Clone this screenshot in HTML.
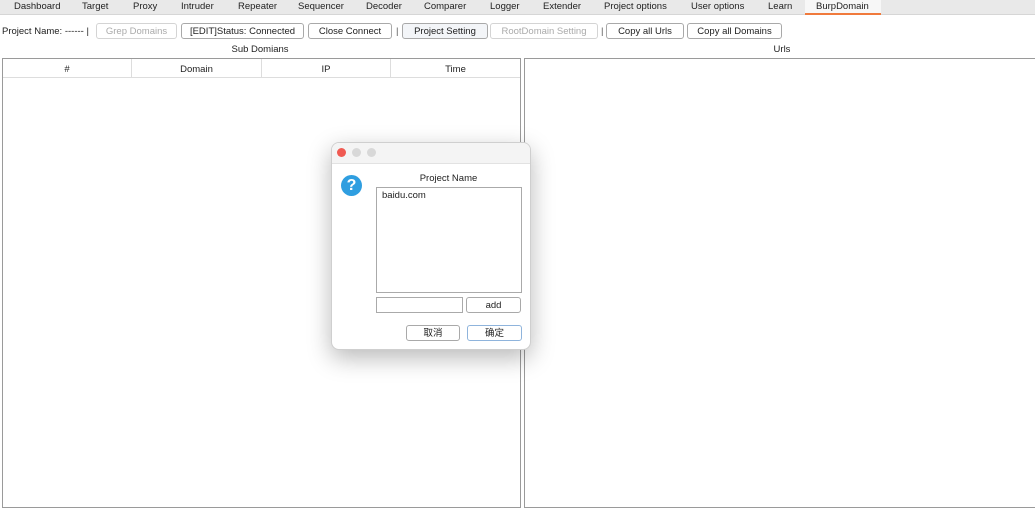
<!DOCTYPE html>
<html><head><meta charset="utf-8"><style>
*{box-sizing:border-box;margin:0;padding:0}
body{width:1035px;height:503px;background:#fff;font-family:"Liberation Sans","Noto Sans CJK SC",sans-serif;font-size:9.5px;color:#222;position:relative;overflow:hidden}
.a{position:absolute;white-space:nowrap}
#tabs{position:absolute;left:0;top:0;width:1035px;height:15px;background:#e9e9e9;border-bottom:1px solid #d6d6d6}
.btn{position:absolute;height:16px;border:1px solid #a9a9a9;border-radius:3px;background:#fff;text-align:center;line-height:16px;font-size:9.5px;color:#222}
.dis{color:#aaa;border-color:#d4d4d4}
.sep{position:absolute;top:26px;color:#555}
</style></head><body>
<div id="tabs"></div>
<div class="a" style="left:805px;top:0;width:76px;height:15px;background:#f7f7f7;border-bottom:2px solid #f07a3c"></div>
<div class="a" style="left:14px;top:1px">Dashboard</div>
<div class="a" style="left:82px;top:1px">Target</div>
<div class="a" style="left:133px;top:1px">Proxy</div>
<div class="a" style="left:181px;top:1px">Intruder</div>
<div class="a" style="left:238px;top:1px">Repeater</div>
<div class="a" style="left:298px;top:1px">Sequencer</div>
<div class="a" style="left:366px;top:1px">Decoder</div>
<div class="a" style="left:424px;top:1px">Comparer</div>
<div class="a" style="left:490px;top:1px">Logger</div>
<div class="a" style="left:543px;top:1px">Extender</div>
<div class="a" style="left:604px;top:1px">Project options</div>
<div class="a" style="left:691px;top:1px">User options</div>
<div class="a" style="left:768px;top:1px">Learn</div>
<div class="a" style="left:816px;top:1px">BurpDomain</div>

<div class="a" style="left:2px;top:26px">Project Name: ------ |</div>
<div class="btn dis" style="left:96px;top:23px;width:81px">Grep Domains</div>
<div class="btn" style="left:181px;top:23px;width:123px">[EDIT]Status: Connected</div>
<div class="btn" style="left:308px;top:23px;width:84px">Close Connect</div>
<div class="sep" style="left:396px">|</div>
<div class="btn" style="left:402px;top:23px;width:86px;background:#f3f5f8">Project Setting</div>
<div class="btn dis" style="left:490px;top:23px;width:108px">RootDomain Setting</div>
<div class="sep" style="left:601px">|</div>
<div class="btn" style="left:606px;top:23px;width:78px">Copy all Urls</div>
<div class="btn" style="left:687px;top:23px;width:95px">Copy all Domains</div>

<div class="a" style="left:0;width:520px;top:44px;text-align:center">Sub Domians</div>
<div class="a" style="left:524px;width:516px;top:44px;text-align:center">Urls</div>

<div class="a" style="left:2px;top:58px;width:519px;height:450px;border:1px solid #9a9a9a"></div>
<div class="a" style="left:3px;top:59px;width:517px;height:19px;border-bottom:1px solid #ddd"></div>
<div class="a" style="left:131px;top:59px;width:1px;height:18px;background:#ddd"></div>
<div class="a" style="left:261px;top:59px;width:1px;height:18px;background:#ddd"></div>
<div class="a" style="left:390px;top:59px;width:1px;height:18px;background:#ddd"></div>
<div class="a" style="left:3px;width:128px;top:64px;text-align:center">#</div>
<div class="a" style="left:132px;width:129px;top:64px;text-align:center">Domain</div>
<div class="a" style="left:262px;width:128px;top:64px;text-align:center">IP</div>
<div class="a" style="left:391px;width:129px;top:64px;text-align:center">Time</div>
<div class="a" style="left:524px;top:58px;width:515px;height:450px;border:1px solid #9a9a9a"></div>

<div class="a" style="left:331px;top:142px;width:200px;height:208px;background:#fff;border:1px solid #cfcfcf;border-radius:8px;box-shadow:0 8px 24px rgba(0,0,0,.28)"></div>
<div class="a" style="left:332px;top:143px;width:198px;height:21px;background:#f4f4f4;border-bottom:1px solid #e2e2e2;border-radius:7px 7px 0 0"></div>
<div class="a" style="left:337px;top:148px;width:9px;height:9px;border-radius:50%;background:#f05a52"></div>
<div class="a" style="left:352px;top:148px;width:9px;height:9px;border-radius:50%;background:#d8d8d8"></div>
<div class="a" style="left:367px;top:148px;width:9px;height:9px;border-radius:50%;background:#d8d8d8"></div>
<div class="a" style="left:341px;top:175px;width:21px;height:21px;border-radius:50%;background:#2f9ee0;color:#fff;font-weight:bold;font-size:16px;text-align:center;line-height:21px">?</div>
<div class="a" style="left:376px;width:145px;top:173px;text-align:center">Project Name</div>
<div class="a" style="left:376px;top:187px;width:146px;height:106px;border:1px solid #aaa"></div>
<div class="a" style="left:382px;top:190px">baidu.com</div>
<div class="a" style="left:376px;top:297px;width:87px;height:16px;border:1px solid #aaa"></div>
<div class="btn" style="left:466px;top:297px;width:55px">add</div>
<div class="btn" style="left:406px;top:325px;width:54px">取消</div>
<div class="btn" style="left:467px;top:325px;width:55px;border-color:#8fb4dc">确定</div>
</body></html>
